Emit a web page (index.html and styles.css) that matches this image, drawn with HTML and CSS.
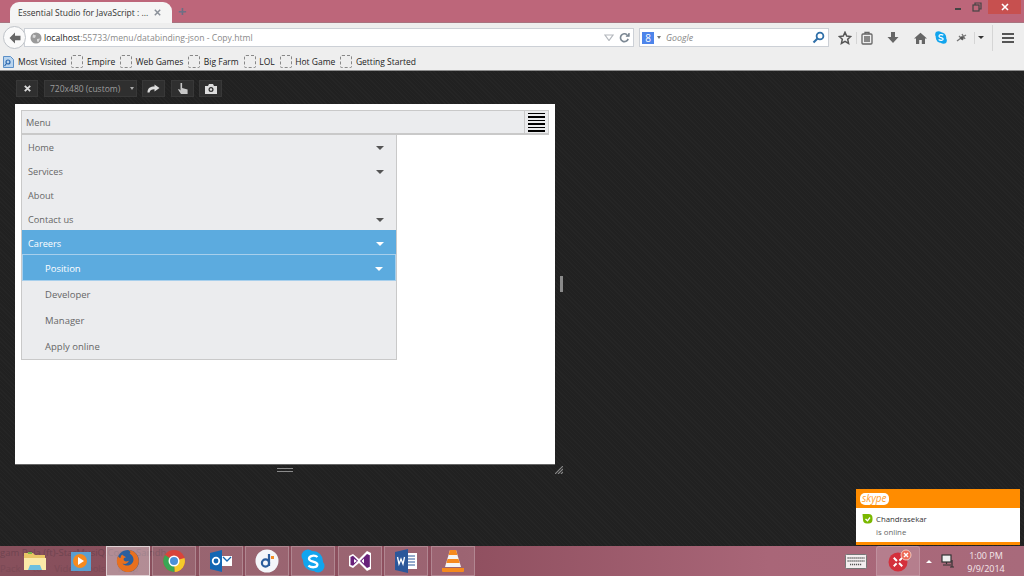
FILE: index.html
```html
<!DOCTYPE html>
<html lang="en">
<head>
  <meta charset="UTF-8">
  <title>Essential Studio for JavaScript</title>
  <link rel="stylesheet" href="styles.css">
</head>
<body>
  <!-- window title bar -->
  <header class="titlebar">
    <div class="tab">
      <span class="tab-title">Essential Studio for JavaScript : ...</span>
      <svg width="7" height="7" viewBox="0 0 7 7" stroke="#8a9099" stroke-width="1.500"><path d="M.8.8l5.400 5.400M6.200.8.8 6.200"/></svg>
    </div>
    <span class="tab-new">+</span>
    <div class="win-controls">
      <span class="win-btn"><svg width="8" height="8" viewBox="0 0 8 8"><rect x="1" y="5" width="6" height="2" fill="#444"/></svg></span>
      <span class="win-btn"><svg width="10" height="10" viewBox="0 0 10 10" fill="none" stroke="#444" stroke-width="1.200"><rect x="1" y="3" width="6" height="6"/><path d="M3 3V1h6v6H7"/></svg></span>
      <span class="win-close"><svg width="8" height="8" viewBox="0 0 8 8" stroke="#fff" stroke-width="1.600"><path d="M1 1l6 6M7 1l-6 6"/></svg></span>
    </div>
  </header>

  <!-- navigation bar -->
  <nav class="navbar">
    <span class="back-btn"><svg width="14" height="14" viewBox="0 0 14 14"><path d="M7 1.500 1.500 7 7 12.500V9.200h5.500V4.800H7z" fill="#666"/></svg></span>
    <div class="urlbar">
      <svg class="globe" width="12" height="12" viewBox="0 0 12 12"><circle cx="6" cy="6" r="5.500" fill="#9a9a9a"/><path d="M3 2.500l3 1-1 2.500-2.500-.5zM7 7l3-.5-1.500 3.500-1.500-.5z" fill="#d8d8d8"/></svg>
      <span class="url"><b>localhost</b>:55733/menu/databinding-json - Copy.html</span>
      <svg class="url-drop" width="10" height="7" viewBox="0 0 10 7"><path d="M1 1h8L5 6.500z" fill="none" stroke="#b4b8bd" stroke-width="1.200"/></svg>
      <svg width="11" height="11" viewBox="0 0 12 12" fill="none" stroke="#7c8894" stroke-width="1.800"><path d="M10 7.500A4.300 4.300 0 1 1 8.800 3"/><path d="M7.500 4.500h3.500V1" stroke-width="1.300" fill="#7c8894"/></svg>
    </div>
    <div class="searchbar">
      <span class="g-badge">8</span>
      <span class="search-caret"></span>
      <span class="search-hint">Google</span>
      <svg width="13" height="13" viewBox="0 0 13 13" fill="none" stroke="#2f6fa8" stroke-width="1.800"><circle cx="8" cy="5" r="3.400"/><path d="M5.500 7.500 1.500 11.500" stroke-width="2.200"/></svg>
    </div>
    <div class="nav-icons">
      <svg class="ni-star" width="14" height="14" viewBox="0 0 14 14"><path d="M7 1.300l1.700 3.800 4 .4-3 2.800.9 4.100L7 10.300l-3.600 2.100.9-4.100-3-2.800 4-.4z" fill="none" stroke="#555" stroke-width="1.500"/></svg>
      <span class="ni-sep"></span>
      <svg class="ni-list" width="12" height="14" viewBox="0 0 12 14" fill="none" stroke="#666" stroke-width="1.300"><rect x="1" y="3" width="10" height="10" rx="1"/><path d="M4 3V1.500h4V3M3 6h6M3 8h6M3 10h6"/></svg>
      <svg class="ni-down" width="12" height="13" viewBox="0 0 12 13"><path d="M4 1h4v5h3.500L6 12 .5 6H4z" fill="#666"/></svg>
      <svg class="ni-home" width="13" height="12" viewBox="0 0 13 12"><path d="M6.500.8 0 6.500h2V12h3.200V8h2.600v4H11V6.500h2z" fill="#666"/></svg>
      <svg class="ni-skype" width="12" height="13" viewBox="0 0 12 13"><circle cx="3.500" cy="3.500" r="3.300" fill="#12a5ee"/><circle cx="8.500" cy="9.500" r="3.300" fill="#12a5ee"/><circle cx="6" cy="6.500" r="5.200" fill="#12a5ee"/><path d="M8.300 4.300C7 3.200 3.900 3.400 4 5.200c.1 1.800 4.200 1 4.200 2.900 0 1.600-3 1.700-4.600.5" fill="none" stroke="#fff" stroke-width="1.200"/></svg>
      <svg class="ni-bug" width="12" height="10" viewBox="0 0 12 10"><path d="M1 8l4-3 5-3M3 3l4 4M6 1l3 5" stroke="#777" stroke-width="1.400" fill="none"/><circle cx="6" cy="5" r="1.800" fill="#555"/></svg>
      <span class="ni-sep ni-sep-b"></span>
      <span class="ni-caret"></span>
      <span class="ni-sep ni-sep-c"></span>
      <span class="ni-burger"><i></i><i></i><i></i></span>
    </div>
  </nav>

  <!-- bookmarks -->
  <div class="bookmarks">
    <svg class="bm-first" width="11" height="12" viewBox="0 0 11 12"><path d="M.5.500h7l3 3v8H.5z" fill="#b9d4ee" stroke="#5b8fc7"/><circle cx="5" cy="6" r="2" fill="none" stroke="#2a66ad" stroke-width="1.200"/><path d="M3.500 7.500 1.500 10" stroke="#2a66ad" stroke-width="1.200"/></svg>
    <span class="bm">Most Visited</span>
    <span class="bm bm-page">Empire</span>
    <span class="bm bm-page">Web Games</span>
    <span class="bm bm-page">Big Farm</span>
    <span class="bm bm-page">LOL</span>
    <span class="bm bm-page">Hot Game</span>
    <span class="bm bm-page">Getting Started</span>
  </div>

  <!-- responsive design view -->
  <main class="stage">
    <div class="rd-toolbar">
      <button class="rd-btn rd-close"><svg width="7" height="7" viewBox="0 0 7 7" stroke="#ddd" stroke-width="1.800"><path d="M.8.8l5.400 5.400M6.200.8.8 6.200"/></svg></button>
      <div class="rd-select">720x480 (custom)<span class="rd-caret"></span></div>
      <button class="rd-btn"><svg width="13" height="9" viewBox="0 0 13 9"><path d="M.5 8.500C.5 4 3.500 2.500 7.500 2.500V.5L12.500 4 7.500 7.500V5.300C4.500 5.300 3 6 2.500 8.500z" fill="#ddd"/></svg></button>
      <button class="rd-btn"><svg width="12" height="13" viewBox="0 0 12 13"><path d="M3.500 1h1.600v5l5.500 1.500V12H4L1 7.500l1-.5 1.500 1.500z" fill="#c8c8c8"/></svg></button>
      <button class="rd-btn rd-last"><svg width="12" height="10" viewBox="0 0 12 10"><path d="M0 2h3l1-2h4l1 2h3v8H0z" fill="#ddd"/><circle cx="6" cy="5.500" r="2.500" fill="#2e2e2e"/><circle cx="6" cy="5.500" r="1.200" fill="#ddd"/></svg></button>
    </div>

    <div class="device-row">
      <div class="device">
        <div class="menu-head">
          <span class="menu-title">Menu</span>
          <span class="menu-toggle"><i></i><i></i><i></i><i></i><i></i><i></i></span>
        </div>
        <ul class="menu-list">
          <li class="menu-item">Home<span class="arrow"></span></li>
          <li class="menu-item">Services<span class="arrow"></span></li>
          <li class="menu-item">About</li>
          <li class="menu-item">Contact us<span class="arrow"></span></li>
          <li class="menu-item is-active">Careers<span class="arrow"></span></li>
          <li class="sub-item sub-active">Position<span class="arrow"></span></li>
          <li class="sub-item">Developer</li>
          <li class="sub-item">Manager</li>
          <li class="sub-item">Apply online</li>
        </ul>
      </div>
      <span class="side-handle"></span>
    </div>
    <div class="device-foot">
      <span class="bottom-handle"></span>
      <svg class="corner-handle" width="8" height="8" viewBox="0 0 8 8" stroke="#8a8a8a" stroke-width="1.100"><path d="M0 8l8-8M3 8l5-5M6 8l2-2"/></svg>
    </div>
  </main>

  <!-- skype toast -->
  <aside class="toast">
    <div class="toast-head"><span class="skype-logo">skype</span></div>
    <div class="toast-body">
      <svg class="toast-status" width="11" height="10" viewBox="0 0 11 10"><path d="M.5 0h6a4 4 0 0 1 4 4v1.500a4 4 0 0 1-4 4H5a4 4 0 0 1-4-4z" fill="#7ab800"/><path d="M3.500 5l2 1.800 2.500-3.300" fill="none" stroke="#fff" stroke-width="1.300"/></svg>
      <div>
        <div class="toast-name">Chandrasekar</div>
        <div class="toast-status-text">is online</div>
      </div>
    </div>
  </aside>

  <!-- taskbar -->
  <footer class="taskbar">
    <span class="ghost-title">gam Pola (ft)-StarMusiQ.Com - Saindh...</span>
    <span class="ghost-menu">Pack &nbsp;&nbsp;&nbsp; to &nbsp;&nbsp;&nbsp; Video Tools &nbsp;&nbsp;&nbsp; Help</span>
    <div class="task-apps">
      <span class="task-app plain"><svg width="24" height="22" viewBox="0 0 24 22"><path d="M1 3h9l2 2h10v15H1z" fill="#e9c566"/><path d="M1 8h22v12H1z" fill="#fbe9a8"/><path d="M7 15h10l2 5H5z" fill="#6cc0e0"/><path d="M5 2h4v2H5z" fill="#7ab648"/></svg></span>
      <span class="task-app plain"><svg width="22" height="22" viewBox="0 0 22 22"><rect x="1" y="2" width="20" height="19" fill="#5a9fd0"/><circle cx="10" cy="11" r="7" fill="#f58a1f"/><path d="M8 7l6 4-6 4z" fill="#fff"/></svg></span>
      <span class="task-app active"><svg width="24" height="24" viewBox="0 0 24 24"><circle cx="12" cy="12" r="11" fill="#2a5f9e"/><path d="M12 1a11 11 0 1 1-10 6c1 1.500 1.500 2 2.500 2 0-2 1-3 2-3.500 0 1.500 2 1 3.500 3-2 0-3 1-2 3 2 2 5 0 5 0-1 3-4 4-6.500 3 3 4 11 2 11-4 0-3-2-5-4-6 1.500-.5 1-2.500-1.500-3.500z" fill="#e8701f"/></svg></span>
      <span class="task-app"><svg width="24" height="24" viewBox="0 0 24 24"><circle cx="12" cy="12" r="11" fill="#d9443a"/><path d="M12 12 22.500 9a11 11 0 0 1-10 14z" fill="#f5c92b"/><path d="M12 12 12.500 23A11 11 0 0 1 3 6z" fill="#3aa655"/><circle cx="12" cy="12" r="5.500" fill="#fff"/><circle cx="12" cy="12" r="4" fill="#4a90d9"/></svg></span>
      <span class="task-app"><svg width="24" height="22" viewBox="0 0 24 22"><path d="M1 3l12-3v22L1 19z" fill="#1467b3"/><circle cx="7" cy="11" r="3.300" fill="none" stroke="#fff" stroke-width="1.800"/><rect x="13" y="6" width="10" height="10" fill="#fff"/><path d="M14 7l4 4 4-4" fill="none" stroke="#1467b3" stroke-width="1.300"/></svg></span>
      <span class="task-app"><svg width="24" height="24" viewBox="0 0 24 24"><circle cx="12" cy="12" r="11.500" fill="#f4f6fa"/><circle cx="10.500" cy="14" r="3.600" fill="none" stroke="#2b5d9c" stroke-width="2.200"/><path d="M14 5v12" stroke="#2b5d9c" stroke-width="2.200"/><rect x="16" y="7" width="3" height="3" fill="#f28c28"/></svg></span>
      <span class="task-app"><svg width="24" height="24" viewBox="0 0 24 24"><circle cx="7" cy="7" r="6.500" fill="#12a5ee"/><circle cx="17" cy="17" r="6.500" fill="#12a5ee"/><circle cx="12" cy="12" r="10" fill="#12a5ee"/><path d="M16.500 8C14 5.800 7.800 6.300 8 9.800c.2 3.600 8.400 2 8.400 5.800 0 3.200-6 3.400-9 1" fill="none" stroke="#fff" stroke-width="2.300"/></svg></span>
      <span class="task-app"><svg width="24" height="24" viewBox="0 0 24 24"><path d="M1 7l4-2 6 5 8-8 4 2v16l-4 2-8-8-6 5-4-2z" fill="#fff"/><path d="M2.500 8l2.500-1.200 5 5-5 5L2.500 16zM12 12l7-7 2.800 1.200v11.600L19 19z" fill="#68217a"/><path d="M6 10l3 2-3 2zM16 9.500v5L13.500 12z" fill="#fff"/></svg></span>
      <span class="task-app"><svg width="24" height="24" viewBox="0 0 24 24"><rect x="12" y="4" width="11" height="16" fill="#fff"/><path d="M14 7h7M14 10h7M14 13h7M14 16h7" stroke="#2b579a"/><path d="M1 3l13-3v24L1 21z" fill="#2b579a"/><path d="M3.500 8l1.500 7 2-5 2 5 1.500-7" fill="none" stroke="#fff" stroke-width="1.300"/></svg></span>
      <span class="task-app"><svg width="22" height="24" viewBox="0 0 22 24"><path d="M8 1h6l5 17H3z" fill="#f5f5f5"/><path d="M8 1h6l1.500 5h-9zM5.600 10h10.800l1.300 4H4.400z" fill="#f58a1f"/><path d="M0 19h22v3a1 1 0 0 1-1 1H1a1 1 0 0 1-1-1z" fill="#f58a1f"/></svg></span>
    </div>
    <div class="tray">
      <svg class="tray-kbd" width="22" height="15" viewBox="0 0 22 15"><rect x=".5" y=".5" width="21" height="14" rx="1" fill="#f3eeef" stroke="#777"/><path d="M2.500 4h17M2.500 7h17M5 10.500h12" stroke="#555" stroke-width="1.500" stroke-dasharray="1.200 .8"/></svg>
      <span class="tray-app"><svg width="24" height="24" viewBox="0 0 24 24"><circle cx="10" cy="13" r="9.500" fill="#d4303c"/><path d="M4 13h4.500M11.500 13H16M10 7v4M10 15v4" stroke="#fff" stroke-width="2" transform="rotate(45 10 13)"/><circle cx="18" cy="6" r="5" fill="#ee6a55" stroke="#f2c7bb"/><path d="M16 4l4 4M20 4l-4 4" stroke="#fff" stroke-width="1.400"/></svg></span>
      <span class="tray-up"></span>
      <svg class="tray-net" width="14" height="14" viewBox="0 0 14 14" fill="none" stroke-width="1.200"><rect x="1" y="1" width="9" height="7" stroke="#333" fill="#eee"/><path d="M5.500 8v2M11 6v7M2 11h8M9 13h4" stroke="#333"/></svg>
      <div class="clock">
        <div>1:00 PM</div>
        <div>9/9/2014</div>
      </div>
    </div>
  </footer>
</body>
</html>
```

FILE: styles.css
```css
* {
  margin: 0;
  padding: 0;
  box-sizing: border-box;
}

body {
  width: 1024px;
  height: 576px;
  overflow: hidden;
  display: flex;
  flex-direction: column;
  position: relative;
  font-family: 'Open Sans', sans-serif;
  font-size: 8.8px;
  background-color: #212121;
}

svg {
  display: block;
  flex: none;
}

/* title bar */
.titlebar {
  height: 23px;
  flex: none;
  display: flex;
  align-items: flex-end;
  padding-left: 10px;
  background-color: #bd667a;
  border-bottom: 1px solid #a8737f;
}

.tab {
  width: 162px;
  height: 21px;
  display: flex;
  align-items: center;
  justify-content: space-between;
  padding: 0 11px 1px 8px;
  margin-bottom: -1px;
  font-size: 8.500px;
  background-color: #f5f5f5;
  border-radius: 9px 9px 0 0;
  color: #333;
  white-space: nowrap;
}

.tab-new {
  margin: 0 0 1px 4px;
  width: 12px;
  font-size: 15px;
  line-height: 20px;
  text-align: center;
  font-weight: bold;
  color: #6f6f85;
}

.win-controls {
  margin-left: auto;
  margin-right: 3px;
  align-self: flex-start;
  display: flex;
  align-items: center;
}

.win-btn {
  width: 19px;
  height: 14px;
  display: flex;
  align-items: center;
  justify-content: center;
}

.win-close {
  width: 33px;
  height: 14px;
  margin-left: 2px;
  display: flex;
  align-items: center;
  justify-content: center;
  background-color: #c7504f;
}

/* nav bar */
.navbar {
  height: 29px;
  flex: none;
  display: flex;
  align-items: center;
  position: relative;
  padding-left: 24px;
  background-color: #eeeeee;
}

.back-btn {
  position: absolute;
  left: 3px;
  top: 3px;
  width: 23px;
  height: 23px;
  display: flex;
  align-items: center;
  justify-content: center;
  background-color: #fafafa;
  border: 1px solid #bfc3c8;
  border-radius: 50%;
}

.urlbar {
  width: 610px;
  height: 19px;
  display: flex;
  align-items: center;
  padding: 0 3px 0 5px;
  font-size: 8.650px;
  background-color: #fff;
  border: 1px solid #ccd0d6;
}

.url {
  margin-left: 2px;
  flex: 1;
  color: #8a8a8a;
}

.url b {
  font-weight: 400;
  color: #222;
}

.url-drop {
  margin-right: 5px;
}

.searchbar {
  width: 190px;
  height: 19px;
  margin-left: 5px;
  display: flex;
  align-items: center;
  padding: 0 3px 0 2px;
  background-color: #fff;
  border: 1px solid #ccd0d6;
}

.g-badge {
  width: 12px;
  height: 12px;
  font-size: 10px;
  line-height: 12px;
  text-align: center;
  color: #fff;
  background-color: #4d84ea;
}

.search-caret {
  margin-left: 3px;
  border: 2.500px solid transparent;
  border-top: 3px solid #777;
  border-bottom: 0;
}

.search-hint {
  flex: 1;
  margin-left: 5px;
  font-style: italic;
  color: #888;
}

.nav-icons {
  flex: 1;
  display: flex;
  align-items: center;
  padding-left: 9px;
}

.ni-sep {
  width: 1px;
  height: 12px;
  margin: 0 4px 0 4px;
  background-color: #d5d5d5;
}

.ni-down {
  margin-left: 14px;
}

.ni-home {
  margin-left: 15px;
}

.ni-skype {
  margin-left: 8px;
}

.ni-bug {
  margin-left: 9px;
}

.ni-sep-b {
  margin: 0 3px 0 6px;
}

.ni-caret {
  border: 3px solid transparent;
  border-top: 3px solid #333;
  border-bottom: 0;
}

.ni-sep-c {
  height: 26px;
  margin: 0 9px 0 8px;
}

.ni-burger {
  width: 12px;
  display: flex;
  flex-direction: column;
  gap: 2px;
}

.ni-burger i {
  height: 2px;
  background-color: #555;
}

/* bookmarks */
.bookmarks {
  height: 19px;
  flex: none;
  display: flex;
  align-items: center;
  padding: 1px 0 0 3px;
  font-size: 8.500px;
  color: #222;
  background-color: #eeeeee;
  border-bottom: 1px solid #8d8d8d;
}

.bm {
  margin-left: 4px;
  white-space: nowrap;
}

.bm-page {
  display: flex;
  align-items: center;
  margin-left: 5px;
}

.bm-page::before {
  content: "";
  width: 10px;
  height: 11px;
  margin-right: 3.500px;
  border: 1px dashed #888;
  border-radius: 2px;
}

/* responsive design view */
.stage {
  flex: 1;
  min-height: 0;
  padding: 9px 0 0 15px;
  background-color: #212121;
  background-image: repeating-linear-gradient(45deg, rgba(255, 255, 255, 0.018) 0 1px, transparent 1px 3px);
}

.rd-toolbar {
  height: 17px;
  display: flex;
  gap: 6px;
  padding-left: 1px;
  margin-bottom: 7px;
}

.rd-btn {
  width: 23px;
  height: 17px;
  display: flex;
  align-items: center;
  justify-content: center;
  border: 0;
  background-color: #2f2f2f;
  box-shadow: inset 0 0 0 1px #383838;
}

.rd-close {
  width: 22px;
}

.rd-last {
  margin-left: -1px;
}

.rd-select {
  width: 93px;
  margin-right: -1px;
  display: flex;
  align-items: center;
  justify-content: space-between;
  padding: 0 3px 0 6px;
  color: #9c9c9c;
  font-size: 8.500px;
  background-color: #2f2f2f;
  box-shadow: inset 0 0 0 1px #383838;
}

.rd-caret {
  border: 2.500px solid transparent;
  border-top: 3px solid #aaa;
  border-bottom: 0;
}

.device-row {
  display: flex;
  align-items: center;
  gap: 5px;
}

.device {
  width: 540px;
  height: 360px;
  padding: 6px;
  background-color: #fff;
  box-shadow: 0 1px 0 #666;
}

.menu-head {
  height: 25px;
  display: flex;
  align-items: center;
  justify-content: space-between;
  padding: 0 1px 0 4px;
  width: 528px;
  font-size: 9.200px;
  background-color: #ebecee;
  border: 1px solid #c9c9c9;
  border-bottom-width: 2px;
  color: #666;
}

.menu-toggle {
  width: 23px;
  height: 22px;
  display: flex;
  flex-direction: column;
  align-items: center;
  justify-content: center;
  gap: 2px;
  border-left: 1px solid #c9c9c9;
}

.menu-toggle i {
  width: 17px;
  height: 1.500px;
  background-color: #000;
}

.menu-list {
  list-style: none;
  width: 376px;
  font-size: 9.200px;
  background-color: #ebecee;
  border: solid #c9c9c9;
  border-width: 0 1px 1px;
  color: #666;
}

.menu-item {
  height: 24px;
  display: flex;
  align-items: center;
  justify-content: space-between;
  padding: 1px 12px 0 6px;
}

.is-active {
  height: 25px;
  margin-top: -1px;
  padding-top: 2px;
}

.sub-item {
  height: 26px;
  display: flex;
  align-items: center;
  justify-content: space-between;
  padding: 1px 12px 0 23px;
  font-size: 9.500px;
}

.is-active,
.sub-active {
  color: #fff;
  background-color: #5cabdf;
}

.sub-active {
  border: 1px solid #a7cfec;
  margin-top: -1px;
  height: 27px;
  padding: 2px 12px 0 22px;
}

.arrow {
  border: 4px solid transparent;
  border-top: 4px solid #555;
  border-bottom: 0;
}

.is-active .arrow,
.sub-active .arrow {
  border-top-color: #fff;
}

.side-handle {
  width: 3px;
  height: 16px;
  background-color: #8a8a8a;
}

.device-foot {
  width: 548px;
  height: 11px;
  display: flex;
  align-items: center;
  justify-content: flex-end;
  gap: 262px;
}

.bottom-handle {
  width: 16px;
  height: 4px;
  border: solid #8a8a8a;
  border-width: 1px 0;
}

/* skype toast */
.toast {
  position: absolute;
  left: 856px;
  top: 489px;
  width: 164px;
  height: 56px;
  background-color: #fff;
  border-bottom: 3px solid #ff8c00;
}

.toast-head {
  height: 19px;
  display: flex;
  align-items: center;
  padding-left: 4px;
  background-color: #ff8c00;
}

.skype-logo {
  padding: 0 2px 1px;
  border-radius: 5px;
  font-size: 10px;
  line-height: 11px;
  font-style: italic;
  color: #ff9d2b;
  background-color: #fff;
}

.toast-body {
  display: flex;
  gap: 3px;
  padding: 5px 0 0 6px;
  font-size: 7.800px;
  color: #333;
}

.toast-status {
  margin-top: 1px;
}

.toast-name {
  line-height: 12px;
}

.toast-status-text {
  line-height: 14px;
  color: #666;
}

/* taskbar */
.taskbar {
  height: 30px;
  flex: none;
  display: flex;
  align-items: stretch;
  position: relative;
  padding-left: 13px;
  background: linear-gradient(90deg, #87505c 0%, #8f4f5f 45%, #a96678 75%, #a86a7b 100%);
}

.ghost-title,
.ghost-menu {
  position: absolute;
  left: 0;
  white-space: nowrap;
  color: #6f4450;
  font-size: 9.500px;
  line-height: 13px;
}

.ghost-title {
  top: 0;
}

.ghost-menu {
  top: 16px;
  opacity: 0.5;
}

.task-apps {
  display: flex;
  gap: 2.400px;
  position: relative;
}

.task-app {
  width: 44px;
  display: flex;
  align-items: center;
  justify-content: center;
  background-color: rgba(255, 255, 255, 0.12);
  box-shadow: inset 0 0 0 1px rgba(255, 255, 255, 0.22);
}

.task-app.plain {
  background: none;
  box-shadow: none;
}

.task-app.active {
  background-color: rgba(255, 255, 255, 0.35);
  box-shadow: inset 0 0 0 1px rgba(255, 255, 255, 0.6);
}

.tray {
  margin-left: auto;
  display: flex;
  align-items: center;
  position: relative;
  padding-right: 13px;
}

.tray-app {
  width: 44px;
  height: 30px;
  margin-left: 9px;
  padding-left: 3px;
  display: flex;
  align-items: center;
  justify-content: center;
  background-color: rgba(255, 255, 255, 0.15);
  border-radius: 3px 3px 0 0;
  box-shadow: inset 0 0 0 1px rgba(255, 255, 255, 0.15);
}

.tray-up {
  margin-left: 6px;
  border: 3px solid transparent;
  border-bottom: 3px solid #fff;
  border-top: 0;
}

.tray-net {
  margin-left: 9px;
}

.clock {
  width: 50px;
  margin-left: 6px;
  padding-top: 1px;
  text-align: center;
  font-size: 9px;
  line-height: 13px;
  color: #f4e8ea;
}
```
